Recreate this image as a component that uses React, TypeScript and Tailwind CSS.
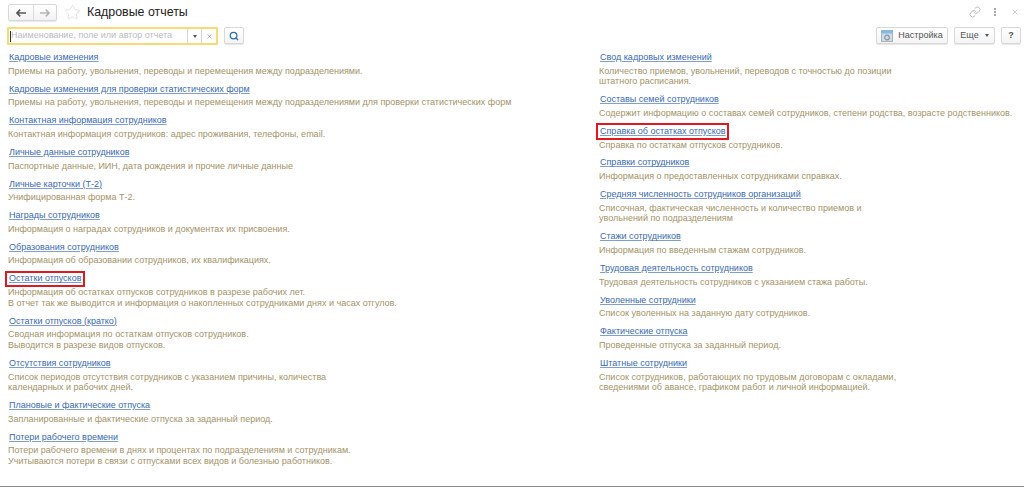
import { Link, Search, Star, X } from "lucide-react";

type Report = { title: string; lines: string[]; marked?: boolean };

const leftReports: Report[] = [
  { title: "Кадровые изменения", lines: ["Приемы на работу, увольнения, переводы и перемещения между подразделениями."] },
  { title: "Кадровые изменения для проверки статистических форм", lines: ["Приемы на работу, увольнения, переводы и перемещения между подразделениями для проверки статистических форм"] },
  { title: "Контактная информация сотрудников", lines: ["Контактная информация сотрудников: адрес проживания, телефоны, email."] },
  { title: "Личные данные сотрудников", lines: ["Паспортные данные, ИИН, дата рождения и прочие личные данные"] },
  { title: "Личные карточки (Т-2)", lines: ["Унифицированная форма Т-2."] },
  { title: "Награды сотрудников", lines: ["Информация о наградах сотрудников и документах их присвоения."] },
  { title: "Образования сотрудников", lines: ["Информация об образовании сотрудников, их квалификациях."] },
  {
    title: "Остатки отпусков",
    marked: true,
    lines: [
      "Информация об остатках отпусков сотрудников в разрезе рабочих лет.",
      "В отчет так же выводится и информация о накопленных сотрудниками днях и часах отгулов.",
    ],
  },
  { title: "Остатки отпусков (кратко)", lines: ["Сводная информация по остаткам отпусков сотрудников.", "Выводится в разрезе видов отпусков."] },
  {
    title: "Отсутствия сотрудников",
    lines: ["Список периодов отсутствия сотрудников с указанием причины, количества", "календарных и рабочих дней."],
  },
  { title: "Плановые и фактические отпуска", lines: ["Запланированные и фактические отпуска за заданный период."] },
  {
    title: "Потери рабочего времени",
    lines: [
      "Потери рабочего времени в днях и процентах по подразделениям и сотрудникам.",
      "Учитываются потери в связи с отпусками всех видов и болезнью работников.",
    ],
  },
];

const rightReports: Report[] = [
  {
    title: "Свод кадровых изменений",
    lines: ["Количество приемов, увольнений, переводов с точностью до позиции", "штатного расписания."],
  },
  { title: "Составы семей сотрудников", lines: ["Содержит информацию о составах семей сотрудников, степени родства, возрасте родственников."] },
  { title: "Справка об остатках отпусков", marked: true, lines: ["Справка по остаткам отпусков сотрудников."] },
  { title: "Справки сотрудников", lines: ["Информация о предоставленных сотрудниками справках."] },
  {
    title: "Средняя численность сотрудников организаций",
    lines: ["Списочная, фактическая численность и количество приемов и", "увольнений по подразделениям"],
  },
  { title: "Стажи сотрудников", lines: ["Информация по введенным стажам сотрудников."] },
  { title: "Трудовая деятельность сотрудников", lines: ["Трудовая деятельность сотрудников с указанием стажа работы."] },
  { title: "Уволенные сотрудники", lines: ["Список уволенных на заданную дату сотрудников."] },
  { title: "Фактические отпуска", lines: ["Проведенные отпуска за заданный период."] },
  {
    title: "Штатные сотрудники",
    lines: ["Список сотрудников, работающих по трудовым договорам с окладами,", "сведениями об авансе, графиком работ и личной информацией."],
  },
];

function ReportItem({ report }: { report: Report }) {
  return (
    <div className="pb-[5.35px]">
      <div className="relative h-[14px] leading-[14px] pl-px">
        {report.marked && (
          <div className="absolute -left-[3px] -top-[0.5px] h-[16.5px] border-2 border-[#e2171f] w-[var(--w)]" />
        )}
        <a href="#" className="relative text-[#3a6ab4] underline underline-offset-1 decoration-[#7f9fd2]">
          {report.title}
        </a>
      </div>
      <div className="mt-[1.7px] text-[#a39468] leading-[10.6px]">
        {report.lines.map((line) => (
          <div key={line} className="whitespace-nowrap">
            {line}
          </div>
        ))}
      </div>
    </div>
  );
}

function Column({ reports, className }: { reports: Report[]; className: string }) {
  return (
    <div className={className}>
      {reports.map((report) => (
        <ReportItem key={report.title} report={report} />
      ))}
    </div>
  );
}

function Button({ children, className }: { children: React.ReactNode; className: string }) {
  return (
    <div
      className={`h-[17px] flex items-center justify-center border border-[#d8d8d8] rounded-[2px] bg-gradient-to-b from-white to-[#f4f4f4] shadow-[0_1px_1px_rgba(0,0,0,0.1)] text-[#555] ${className}`}
    >
      {children}
    </div>
  );
}

export default function App() {
  return (
    <div className="h-[487px] w-[1024px] bg-white border-b border-[#8c8c8c] overflow-hidden text-[9px] font-['Liberation_Sans',Arial,sans-serif] [--w:80px]">
      {/* Title row */}
      <div className="h-[27px] flex items-start pt-[4px] pl-[8px]">
        <div className="flex h-[17px] w-[49px] border border-[#d8d8d8] rounded-[2px] bg-gradient-to-b from-white to-[#f2f2f2] shadow-[0_1px_1px_rgba(0,0,0,0.1)]">
          <div className="w-[25px] flex items-center justify-center border-r border-[#dcdcdc]">
            <svg width="10" height="8" viewBox="0 0 10 8">
              <path d="M4.2.6.9 4l3.3 3.4M1 4h9" fill="none" stroke="#555" strokeWidth="1.6" />
            </svg>
          </div>
          <div className="flex-1 flex items-center justify-center">
            <svg width="10" height="8" viewBox="0 0 10 8">
              <path d="M5.8.6 9.1 4 5.8 7.4M9 4H0" fill="none" stroke="#b5b5b5" strokeWidth="1.6" />
            </svg>
          </div>
        </div>
        <Star size={17} strokeWidth={0.8} className="ml-[7px] text-[#cfcfcf]" />
        <div className="ml-[6px] text-[12.4px] leading-[17px] text-[#222]">Кадровые отчеты</div>
        <div className="ml-auto flex items-center text-[#8a8a8a] h-[15px]">
          <Link size={12} strokeWidth={1.1} />
          <div className="ml-[13px] w-[2px] flex flex-col gap-px">
            <span className="h-[2px] bg-[#aaa]" />
            <span className="h-[2px] bg-[#aaa]" />
            <span className="h-[2px] bg-[#aaa]" />
          </div>
          <X size={8} strokeWidth={1.2} className="ml-[15px] mr-[5px]" />
        </div>
      </div>

      {/* Toolbar */}
      <div className="h-[17px] flex pl-[7px] pr-[3px]">
        <div className="w-[211px] h-[18px] flex items-center border-2 border-[#f6da72] rounded-[1px] bg-white">
          <div className="w-px h-[11px] ml-[1px] bg-[#333]" />
          <div className="flex-1 text-[#bcbcbc] whitespace-nowrap">Наименование, поле или автор отчета</div>
          <div className="w-[14px] h-full flex items-center justify-center border-l border-[#d4d4d4] text-[#555]">
            <span className="border-x-[2px] border-t-[3px] border-x-transparent border-t-[#555]" />
          </div>
          <div className="w-[15px] h-full flex items-center justify-center border-l border-[#d4d4d4]">
            <X size={7} strokeWidth={1.5} className="text-[#666]" />
          </div>
        </div>
        <Button className="ml-[6px] w-[20px]">
          <Search size={10} strokeWidth={3} className="text-[#2f6ea8]" />
        </Button>
        <Button className="ml-auto w-[72px] gap-[5px]">
          <svg width="12" height="12" viewBox="0 0 12 12">
            <rect x="0.5" y="0.5" width="11" height="11" fill="#d3dbe2" stroke="#a7b3bf" />
            <rect x="0.5" y="0.5" width="11" height="3" fill="#7fbcec" />
            <circle cx="6" cy="7.5" r="2.3" fill="none" stroke="#8b96a0" strokeWidth="1.2" />
          </svg>
          <span>Настройка</span>
        </Button>
        <Button className="ml-[6px] w-[41px] gap-[6px]">
          <span>Еще</span>
          <span className="border-x-[2px] border-t-[3px] border-x-transparent border-t-[#555]" />
        </Button>
        <Button className="ml-[6px] w-[20px] font-bold">?</Button>
      </div>

      {/* Report lists */}
      <div className="flex mt-[6px]">
        <Column reports={leftReports} className="w-[599px] pl-[8px] shrink-0" />
        <Column reports={rightReports} className="flex-1 [--w:133px]" />
      </div>
    </div>
  );
}
